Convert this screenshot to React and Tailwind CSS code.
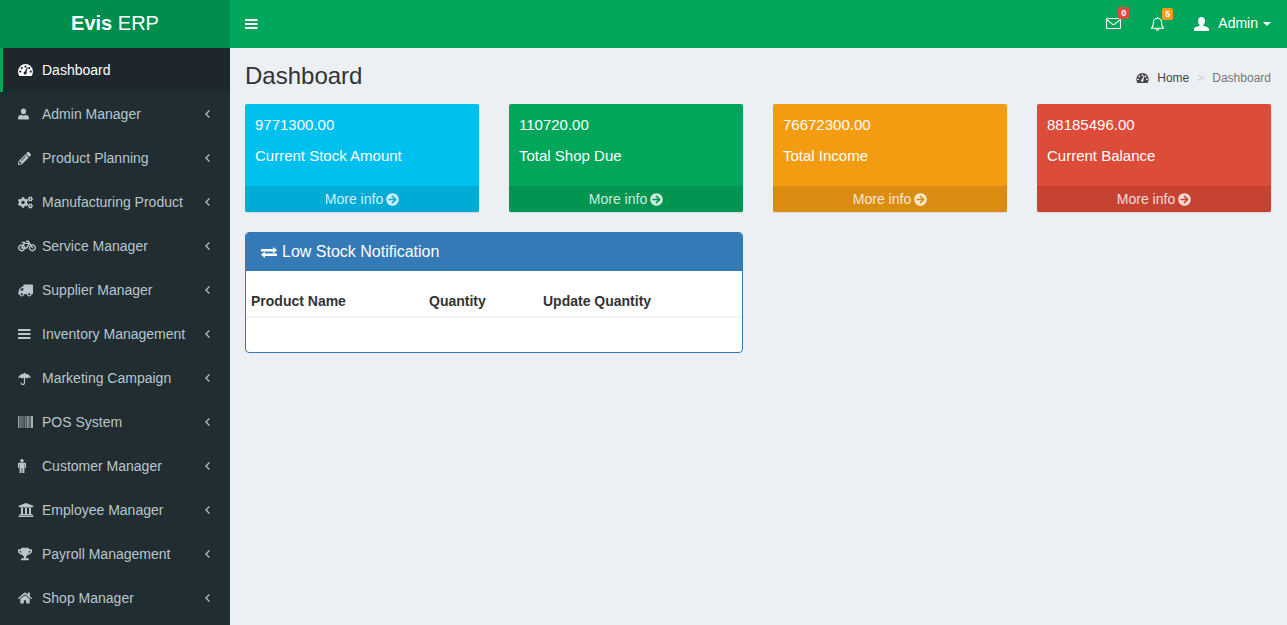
import React from "react";
import { FaPencilAlt, FaCogs, FaBicycle, FaTruck, FaUniversity, FaTrophy, FaHome, FaArrowCircleRight } from "react-icons/fa";

const Gauge = ({ className }) => (
  <svg viewBox="0 0 16 13" className={className} fill="currentColor" fillRule="evenodd">
    <path d="M8 0a8 8 0 0 0-8 8c0 1.9.5 3.6 1.4 5h13.2c.9-1.4 1.4-3.1 1.4-5a8 8 0 0 0-8-8z
      M8 1.6a1.2 1.2 0 1 1 0 2.4 1.2 1.2 0 0 1 0-2.4z
      M4 3.2a1.2 1.2 0 1 1 0 2.4 1.2 1.2 0 0 1 0-2.4z
      M2.3 7a1.2 1.2 0 1 1 0 2.4 1.2 1.2 0 0 1 0-2.4z
      M13.7 7a1.2 1.2 0 1 1 0 2.4 1.2 1.2 0 0 1 0-2.4z
      M12 3.2a1.2 1.2 0 1 1 0 2.4 1.2 1.2 0 0 1 0-2.4z
      M7.2 8.1 9.6 3.6l.9.3-1.4 4.9a1.7 1.7 0 1 1-1.9-.7z" />
  </svg>
);
const UserShape = ({ className }) => (
  <svg viewBox="0 0 12 12" className={className} fill="currentColor">
    <ellipse cx="6" cy="3.1" rx="2.8" ry="3.1" />
    <path d="M0 11v-1C0 8.3 1.4 7.2 3.6 6.7 4.3 7.4 5.1 7.7 6 7.7s1.7-.3 2.4-1C10.6 7.2 12 8.3 12 10v1c0 .6-.4 1-1 1H1c-.6 0-1-.4-1-1z" />
  </svg>
);
const TopUser = ({ className }) => (
  <svg viewBox="0 0 15 14" className={className} fill="currentColor">
    <path d="M7.5 0C9.6 0 11 1.6 11 3.9c0 1.5-.6 2.9-1.5 3.7-.3.3-.3.9.1 1.2.8.6 5.4 1.4 5.4 3.2V14H0v-2c0-1.8 4.6-2.6 5.4-3.2.4-.3.4-.9.1-1.2C4.6 6.8 4 5.4 4 3.9 4 1.6 5.4 0 7.5 0z" />
  </svg>
);
const Bars = ({ className }) => (
  <svg viewBox="0 0 12.5 10" className={className} fill="currentColor">
    <rect width="12.5" height="2" rx=".3" />
    <rect y="4" width="12.5" height="2" rx=".3" />
    <rect y="8" width="12.5" height="2" rx=".3" />
  </svg>
);
const Umbrella = ({ className }) => (
  <svg viewBox="0 0 14 14" className={className} fill="currentColor">
    <path d="M7 .5c.3 0 .5.2.5.5v.6C10.9 1.9 13.3 4 14 7c-.6-.6-1.3-1-2.1-1-.9 0-1.7.5-2.3 1.2C9.1 6.6 8.4 6.2 7.6 6.1v5.4c0 1.4-1 2.5-2.4 2.5-1.2 0-2.3-1-2.3-2.2 0-.4.3-.7.6-.7s.6.3.6.7c0 .6.5 1 1.1 1 .7 0 1.1-.6 1.1-1.3V6.1c-.8.1-1.5.5-2 1.1C3.7 6.5 2.9 6 2.1 6 1.3 6 .6 6.4 0 7 .7 4 3.1 1.9 6.5 1.6V1c0-.3.2-.5.5-.5z" />
  </svg>
);
const Barcode = ({ className }) => (
  <svg viewBox="0 0 15 12" className={className} fill="currentColor">
    <rect x="0" width="1.4" height="12" opacity=".8" />
    <rect x="2" width="1" height="12" opacity=".45" />
    <rect x="3.3" width="1.4" height="12" opacity=".55" />
    <rect x="5.3" width="1" height="12" opacity=".45" />
    <rect x="6.8" width="1.5" height="12" opacity=".55" />
    <rect x="8.8" width="2" height="12" opacity=".7" />
    <rect x="11.4" width="1" height="12" opacity=".6" />
    <rect x="12.8" width="2.2" height="12" opacity=".85" />
  </svg>
);
const Male = ({ className }) => (
  <svg viewBox="0 0 8 14" className={className} fill="currentColor">
    <circle cx="4" cy="1.7" r="1.7" />
    <path d="M1.2 3.8h5.6c.7 0 1.2.5 1.2 1.2v3.6c0 .8-1.2.8-1.2 0V5.6h-.4V14H4.4V9.4h-.8V14H1.6V5.6h-.4v3c0 .8-1.2.8-1.2 0V5c0-.7.5-1.2 1.2-1.2z" />
  </svg>
);
const Chevron = ({ className }) => (
  <svg viewBox="0 0 5 8" className={className} fill="none" stroke="currentColor" strokeWidth="1.2">
    <path d="M4.4.5.9 4l3.5 3.5" />
  </svg>
);
const Envelope = ({ className }) => (
  <svg viewBox="0 0 15 11" className={className} fill="none" stroke="currentColor" strokeWidth="1.1">
    <rect x=".55" y=".55" width="13.9" height="9.9" rx=".8" />
    <path d="M.8 1.6 6.3 6.2c.7.6 1.7.6 2.4 0l5.5-4.6" />
  </svg>
);
const Bell = ({ className }) => (
  <svg viewBox="0 0 13 14" className={className} fill="none" stroke="currentColor" strokeWidth="1.1">
    <path d="M6.5 1.3c-2.4 0-4 1.7-4 4 0 3.6-1 4.8-1.9 5.9h11.8c-.9-1.1-1.9-2.3-1.9-5.9 0-2.3-1.6-4-4-4z" />
    <path d="M6.5 0v1.3M5 11.6a1.5 1.5 0 0 0 3 0" />
  </svg>
);
const Exchange = ({ className }) => (
  <svg viewBox="0 0 16 11" className={className} fill="currentColor">
    <path d="M0 2h12V0l4 3.2-4 3.2V4.4H0z" />
    <path d="M16 6.6H4v-2L0 7.8 4 11V9h12z" />
  </svg>
);

const menu = [
  [UserShape, "Admin Manager", "w-[11px] h-[12px]"],
  [FaPencilAlt, "Product Planning", "w-[13px] h-[13px]"],
  [FaCogs, "Manufacturing Product", "w-[15px] h-[15px]"],
  [FaBicycle, "Service Manager", "w-[18px] h-[18px]"],
  [FaTruck, "Supplier Manager", "w-[15px] h-[15px] -scale-x-100"],
  [Bars, "Inventory Management", "w-[12.5px] h-[10px]"],
  [Umbrella, "Marketing Campaign", "w-[13px] h-[13px]"],
  [Barcode, "POS System", "w-[15px] h-[12px]"],
  [Male, "Customer Manager", "w-[8px] h-[14px]"],
  [FaUniversity, "Employee Manager", "w-[16px] h-[16px]"],
  [FaTrophy, "Payroll Management", "w-[14px] h-[14px]"],
  [FaHome, "Shop Manager", "w-[14px] h-[14px]"],
];

const cards = [
  ["9771300.00", "Current Stock Amount", "bg-[#00c0ef]"],
  ["110720.00", "Total Shop Due", "bg-[#00a65a]"],
  ["76672300.00", "Total Income", "bg-[#f39c12]"],
  ["88185496.00", "Current Balance", "bg-[#dd4b39]"],
];

export default function App() {
  return (
    <div className="h-[625px] overflow-hidden flex flex-col bg-[#ecf0f5] text-[14px] text-[#333] font-['Liberation_Sans',Arial,sans-serif]">
      <header className="flex h-12 shrink-0 bg-[#00a65a] text-white">
        <div className="w-[230px] shrink-0 bg-[#008d4c] flex items-center justify-center text-[20px] pb-[2px]">
          <span><b>Evis</b> ERP</span>
        </div>
        <div className="flex-1 flex items-center pl-[15px] pr-4 pb-[1px]">
          <Bars className="w-[12.5px] h-[10px]" />
          <div className="ml-auto flex items-center">
            <div className="relative mr-[30px]">
              <Envelope className="w-[15px] h-[11px]" />
              <span className="absolute -top-[11px] left-[12px] h-[12px] w-[11px] rounded-[2px] bg-[#dd4b39] text-[9px] font-bold leading-[12px] text-center">0</span>
            </div>
            <div className="relative mr-[30px]">
              <Bell className="w-[13px] h-[14px]" />
              <span className="absolute -top-[9px] left-[11px] h-[12px] w-[11px] rounded-[2px] bg-[#f39c12] text-[9px] font-bold leading-[12px] text-center">5</span>
            </div>
            <TopUser className="w-[15px] h-[14px] mr-[9px]" />
            <span>Admin</span>
            <span className="ml-[5px] w-0 h-0 border-x-[4px] border-t-[4px] border-x-transparent border-t-white" />
          </div>
        </div>
      </header>
      <div className="flex flex-1 min-h-0">
        <aside className="w-[230px] shrink-0 bg-[#222d32] text-[#b8c7ce]">
          <div className="h-11 flex items-center bg-[#1e282c] border-l-[3px] border-[#00a65a] pl-[15px] text-white">
            <Gauge className="w-[15px] h-[12px] mr-[9px]" />
            <span>Dashboard</span>
          </div>
          {menu.map(([Icon, label, size]) => (
            <div key={label} className="h-11 flex items-center pl-[18px] pr-[20px]">
              <span className="w-[24px] shrink-0 flex items-center">
                <Icon className={size} />
              </span>
              <span>{label}</span>
              <Chevron className="ml-auto w-[5px] h-[8px]" />
            </div>
          ))}
        </aside>
        <main className="flex-1 min-w-0 pl-[15px]">
          <div className="w-[1026px]">
            <div className="h-14 flex items-center justify-between">
              <h1 className="text-[24px] leading-[26px] mt-[-1px]">Dashboard</h1>
              <div className="flex items-center text-[12px] mt-[3px]">
                <Gauge className="w-[13px] h-[10px] mr-[8px] text-[#444]" />
                <span className="text-[#444]">Home</span>
                <span className="text-[#ccc] px-[8px]">&gt;</span>
                <span className="text-[#777]">Dashboard</span>
              </div>
            </div>
            <div className="grid grid-cols-4 gap-[30px]">
              {cards.map(([value, label, bg]) => (
                <div key={label} className={`${bg} h-[108px] rounded-[2px] shadow-[0_1px_1px_rgba(0,0,0,0.1)] text-white flex flex-col text-[15px]`}>
                  <div className="flex-1 px-[10px] pt-[11px]">
                    <div className="leading-[20px]">{value}</div>
                    <div className="leading-[20px] mt-[11px]">{label}</div>
                  </div>
                  <div className="h-[26px] flex items-center justify-center gap-[3px] bg-black/10 text-white/80 text-[14px]">
                    <span>More info</span>
                    <FaArrowCircleRight className="text-[13px]" />
                  </div>
                </div>
              ))}
            </div>
            <div className="mt-5 w-[498px] h-[121px] rounded-[4px] border border-[#337ab7] bg-white overflow-hidden">
              <div className="h-[38px] bg-[#337ab7] text-white flex items-center pl-[15px] text-[16px]">
                <Exchange className="w-[16px] h-[11px] mr-[5px]" />
                <span>Low Stock Notification</span>
              </div>
              <div className="mt-[12px] h-[35px] pt-[4px] flex items-center border-b-2 border-[#f4f4f4] font-bold pl-[5px]">
                <span className="w-[178px]">Product Name</span>
                <span className="w-[114px]">Quantity</span>
                <span>Update Quantity</span>
              </div>
            </div>
          </div>
        </main>
      </div>
    </div>
  );
}
